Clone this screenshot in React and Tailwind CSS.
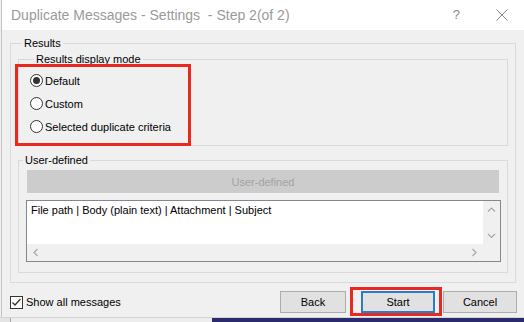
import React from 'react';

function Radio({ label, checked }) {
  return (
    <div className="flex h-[23px] items-center gap-[2px]">
      <span className="flex h-[13px] w-[13px] items-center justify-center rounded-full border border-[#333333] bg-white">
        {checked && <span className="h-[7px] w-[7px] rounded-full bg-[#333333]" />}
      </span>
      <span>{label}</span>
    </div>
  );
}

function Chevron({ dir }) {
  const paths = {
    up: 'M1 5.5 L4.5 2 L8 5.5',
    down: 'M1 2 L4.5 5.5 L8 2',
    left: 'M5.5 1 L2 4.5 L5.5 8',
    right: 'M2.5 1 L6 4.5 L2.5 8',
  };
  const horizontal = dir === 'left' || dir === 'right';
  return (
    <svg width={horizontal ? 8 : 9} height={horizontal ? 9 : 8} viewBox={horizontal ? '0 0 8 9' : '0 0 9 8'}>
      <path d={paths[dir]} fill="none" stroke="#a6a6a6" strokeWidth="1.2" />
    </svg>
  );
}

function Button({ children, focused, className = '' }) {
  return (
    <div
      className={`flex h-[22px] items-center justify-center bg-[#e1e1e1] ${
        focused ? 'border-2 border-[#2a7bc9]' : 'border border-[#adadad]'
      } ${className}`}
    >
      {children}
    </div>
  );
}

export default function App() {
  return (
    <div className="relative flex h-[322px] w-[524px] flex-col overflow-hidden bg-[#f0f0f0] font-['Liberation_Sans',Arial,sans-serif] text-[11px] leading-[16px] text-black">
      <div className="ml-px flex h-[317px] flex-col border-l border-[#c4c4c4]">
        {/* title bar */}
        <div className="flex h-[30px] items-center bg-white pb-[1px] pl-[9px] pr-[16px]">
          <span className="text-[14px] text-[#9a9a9a]">Duplicate Messages - Settings&nbsp; - Step 2(of 2)</span>
          <span className="ml-auto text-[13px] text-[#8a8a8a]">?</span>
          <svg className="ml-[36px]" width="12" height="12" viewBox="0 0 12 12">
            <path d="M0.5 0.5 L11.5 11.5 M11.5 0.5 L0.5 11.5" stroke="#8a8a8a" strokeWidth="1" />
          </svg>
        </div>

        {/* Results group */}
        <fieldset className="ml-[8px] mt-[5px] h-[248px] w-[506px] border border-[#dadada] px-[7px]">
          <legend className="ml-[4px] px-[2px]">Results</legend>

          <fieldset className="h-[95px] w-full border border-[#dadada] pl-[11px] pt-[2px]">
            <legend className="ml-[4px] px-[2px]">Results display mode</legend>
            <Radio label="Default" checked />
            <Radio label="Custom" />
            <Radio label="Selected duplicate criteria" />
          </fieldset>

          <fieldset className="mt-[6px] h-[121px] w-full border border-[#dadada]">
            <legend className="ml-[4px] px-[2px]">User-defined</legend>
            <div className="ml-[8px] mt-[2px] flex h-[23px] w-[472px] items-center justify-center bg-[#cccccc] text-[#a3a3a3]">
              User-defined
            </div>
            <div className="ml-[7px] mt-[7px] flex h-[62px] w-[475px] border border-[#828790] bg-[#f0f0f0]">
              <div className="flex w-[456px] flex-col">
                <div className="h-[43px] bg-white pl-[4px] pt-[1px]">
                  File path | Body (plain text) | Attachment | Subject
                </div>
                <div className="flex h-[17px] items-center justify-between px-[5px]">
                  <Chevron dir="left" />
                  <Chevron dir="right" />
                </div>
              </div>
              <div className="flex w-[17px] flex-col">
                <div className="flex h-[17px] items-center justify-center">
                  <Chevron dir="up" />
                </div>
                <div className="h-[9px]" />
                <div className="flex h-[17px] items-center justify-center">
                  <Chevron dir="down" />
                </div>
              </div>
            </div>
          </fieldset>
        </fieldset>

        {/* footer */}
        <div className="flex h-[34px] items-start pl-[8px] pr-[7px] pt-[8px]">
          <div className="mt-[3px] flex items-center gap-[3px]">
            <span className="flex h-[13px] w-[13px] items-center justify-center border border-[#333333] bg-white">
              <svg width="11" height="11" viewBox="0 0 11 11">
                <path d="M1.5 5.5 L4 8 L9.5 2" fill="none" stroke="#333333" strokeWidth="1.3" />
              </svg>
            </span>
            <span>Show all messages</span>
          </div>
          <Button className="ml-auto w-[66px]">Back</Button>
          <Button focused className="ml-[15px] w-[74px]">Start</Button>
          <Button className="ml-[8px] w-[74px]">Cancel</Button>
        </div>
      </div>

      {/* desktop strip below the window */}
      <div className="flex h-[5px] border-t border-[#d4d4d4]">
        <div className="w-[10px] bg-[#e4e4e4]" />
        <div className="w-px bg-[#a8a8a8]" />
        <div className="w-[201px] bg-[#ededed]" />
        <div className="flex-1 bg-[#2b2a6c]" />
      </div>

      {/* red annotation boxes */}
      <div className="absolute left-[15px] top-[64px] h-[82px] w-[176px] border-[3px] border-[#e8291f]" />
      <div className="absolute left-[350px] top-[287px] h-[29px] w-[92px] border-[3px] border-[#e8291f]" />
    </div>
  );
}
